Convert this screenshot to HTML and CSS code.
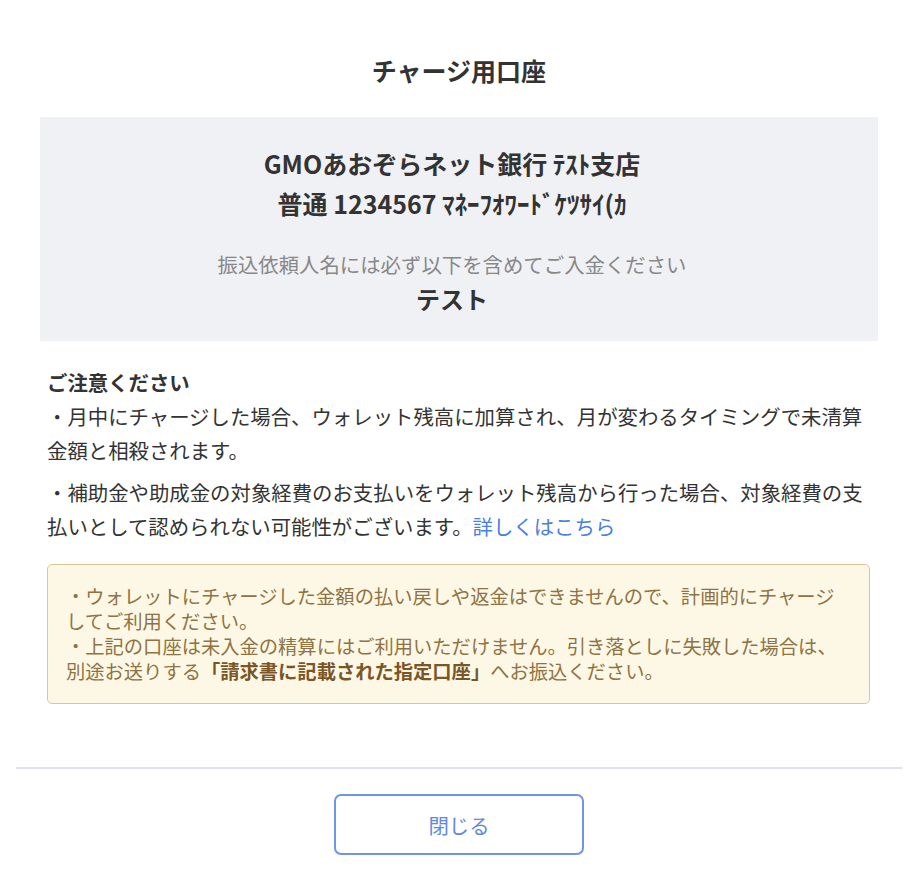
FILE: index.html
```html
<!DOCTYPE html>
<html lang="ja">
<head>
<meta charset="utf-8">
<title>チャージ用口座</title>
<link rel="stylesheet" href="styles.css">
</head>
<body>
<div class="modal">
  <h1 class="title">チャージ用口座</h1>
  <div class="content">
    <div class="account">
      <p class="bank">GMOあおぞらネット銀行 ﾃｽﾄ支店</p>
      <p class="bank">普通 1234567 ﾏﾈｰﾌｵﾜｰﾄﾞｹﾂｻｲ(ｶ</p>
      <p class="label">振込依頼人名には必ず以下を含めてご入金ください</p>
      <p class="name">テスト</p>
    </div>
    <div class="notes">
      <p class="notes-title">ご注意ください</p>
      <p class="note">・月中にチャージした場合、ウォレット残高に加算され、月が変わるタイミングで未清算金額と相殺されます。</p>
      <p class="note">・補助金や助成金の対象経費のお支払いをウォレット残高から行った場合、対象経費の支払いとして認められない可能性がございます。<a class="link" href="#">詳しくはこちら</a></p>
      <div class="warning">
        <p class="warning-line">・ウォレットにチャージした金額の払い戻しや返金はできませんので、計画的にチャージしてご利用ください。</p>
        <p class="warning-line">・上記の口座は未入金の精算にはご利用いただけません。引き落としに失敗した場合は、別途お送りする<strong class="strong">「請求書に記載された指定口座」</strong>へお振込ください。</p>
      </div>
    </div>
  </div>
  <div class="footer">
    <button class="close-btn" type="button">閉じる</button>
  </div>
</div>
</body>
</html>
```
FILE: styles.css
```css
* { box-sizing: border-box; }
html, body {
  margin: 0;
  padding: 0;
  background: #ffffff;
}
body {
  font-family: "Noto Sans CJK JP", "Noto Sans", sans-serif;
  color: #333333;
}
p { margin: 0; }
.modal {
  width: 918px;
  padding-top: 52px;
}
.title {
  margin: 0;
  text-align: center;
  font-size: 25px;
  line-height: 36px;
  font-weight: 700;
  color: #333333;
}
.content {
  padding: 0 40px;
  margin-top: 29px;
}
.account {
  background: #f0f1f5;
  text-align: center;
  padding: 26px 14px 24px 0;
}
.bank {
  font-size: 25px;
  line-height: 40px;
  font-weight: 700;
  color: #333333;
}
.label {
  margin-top: 26px;
  font-size: 20.4px;
  line-height: 30px;
  color: #888888;
}
.name {
  margin-top: 2px;
  font-size: 24px;
  line-height: 36px;
  font-weight: 700;
  color: #333333;
}
.notes {
  padding: 0 8px 0 7px;
  margin-top: 24px;
}
.notes-title {
  font-size: 20.4px;
  line-height: 34px;
  font-weight: 700;
}
.note {
  font-size: 20.4px;
  line-height: 34px;
  margin-bottom: 8px;
}
.link {
  color: #4a7fe0;
  text-decoration: none;
}
.warning {
  margin-top: 21px;
  background: #fdf8e6;
  border: 1px solid #d9c895;
  border-radius: 5px;
  padding: 19px 26px 19px 18px;
}
.warning-line {
  font-size: 19.3px;
  line-height: 25px;
  color: #8f7343;
}
.strong {
  font-weight: 700;
  color: #7a5626;
}
.footer {
  margin: 63px 16px 0;
  border-top: 2px solid #e1e4ea;
  padding-top: 25px;
  display: flex;
  justify-content: center;
}
.close-btn {
  width: 250px;
  height: 61px;
  background: #ffffff;
  border: 2px solid #6f94ea;
  border-radius: 7px;
  font-family: "Noto Sans CJK JP", "Noto Sans", sans-serif;
  font-size: 20.4px;
  color: #6189e3;
  cursor: pointer;
}
```
